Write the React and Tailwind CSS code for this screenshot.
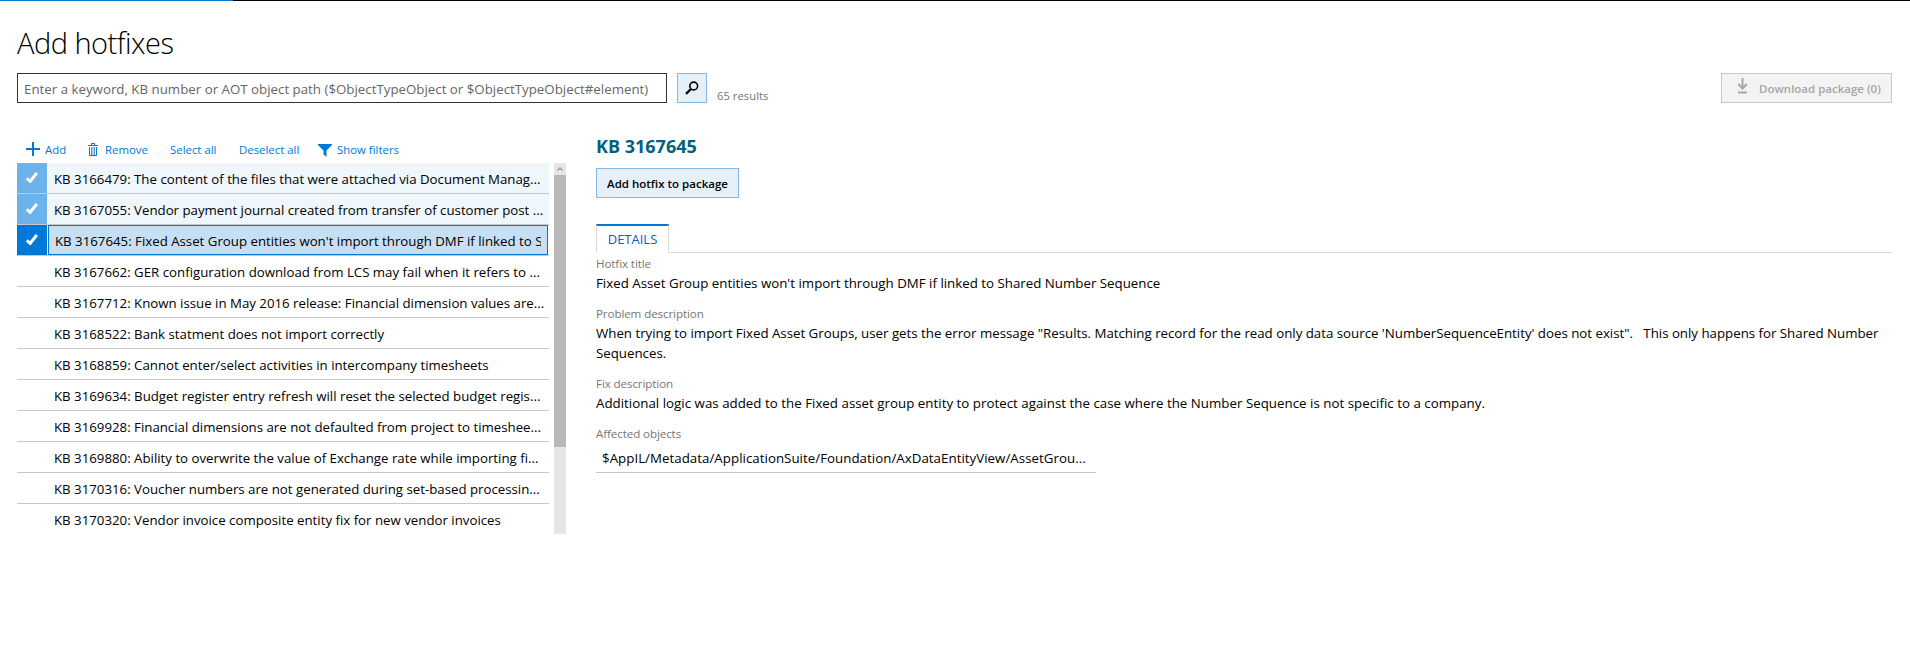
const ROWS = [
  'KB 3166479: The content of the files that were attached via Document Manag...',
  'KB 3167055: Vendor payment journal created from transfer of customer post ...',
  "KB 3167645: Fixed Asset Group entities won't import through DMF if linked to S",
  'KB 3167662: GER configuration download from LCS may fail when it refers to ...',
  'KB 3167712: Known issue in May 2016 release: Financial dimension values are...',
  'KB 3168522: Bank statment does not import correctly',
  'KB 3168859: Cannot enter/select activities in intercompany timesheets',
  'KB 3169634: Budget register entry refresh will reset the selected budget regis...',
  'KB 3169928: Financial dimensions are not defaulted from project to timeshee...',
  'KB 3169880: Ability to overwrite the value of Exchange rate while importing fi...',
  'KB 3170316: Voucher numbers are not generated during set-based processin...',
  'KB 3170320: Vendor invoice composite entity fix for new vendor invoices',
];

function Check() {
  return (
    <svg width="12" height="12" viewBox="0 0 12 12" fill="none" stroke="#fff" strokeWidth="3">
      <path d="M.8 6.400 4.200 9.300 10.800 1" />
    </svg>
  );
}

function Row({ text, index }) {
  const active = index === 2;
  const checked = index < 3;
  return (
    <li className="flex h-[31px] shrink-0 border-b border-[#c8c8c8]">
      <div className={`flex w-[30px] items-center justify-center ${active ? 'bg-[#0078d7]' : checked ? 'bg-[#6cb2eb]' : ''}`}>
        {checked && <Check />}
      </div>
      {active ? (
        <div className="mr-px ml-px flex min-w-0 flex-1 items-center border border-[#0078d7] bg-[#c7dff3] pt-[3px] pr-[6px] pl-[6px]">
          <span className="overflow-hidden whitespace-nowrap">{text}</span>
        </div>
      ) : (
        <div className={`flex min-w-0 flex-1 items-center overflow-hidden pt-[3px] pl-[7px] whitespace-nowrap ${checked ? 'bg-[#eff6fc]' : ''}`}>
          {text}
        </div>
      )}
    </li>
  );
}

function Field({ label, children }) {
  return (
    <div className="mb-[11px]">
      <div className="h-[19px] text-[11.6px] leading-5 tracking-[-0.1px] text-[#767676]">{label}</div>
      <div className="leading-5">{children}</div>
    </div>
  );
}

export default function App() {
  return (
    <div className="h-[648px] w-[1910px] overflow-hidden bg-white font-['Open_Sans','Noto_Sans',sans-serif] text-[13.3px] text-black">
      <div className="flex h-px bg-black">
        <div className="w-[233px] bg-[#0078d7]" />
      </div>
      <header className="pt-[20px] pr-[18px] pl-[17px]">
        <h1 className="h-[44px] text-[29px] leading-[44px] font-light tracking-[-0.5px]">Add hotfixes</h1>
        <div className="mt-[8px] flex h-[30px]">
          <div className="flex w-[650px] items-center border border-[#333] pt-[3px] pl-[6px] whitespace-nowrap text-[#666]">
            Enter a keyword, KB number or AOT object path ($ObjectTypeObject or $ObjectTypeObject#element)
          </div>
          <button className="ml-[10px] flex w-[30px] items-center justify-center border border-[#83bae5] bg-[#e6f0f9]">
            <svg width="14" height="14" viewBox="0 0 14 14" fill="none" stroke="#000">
              <circle cx="8.7" cy="5" r="3.9" strokeWidth="1.6" />
              <path d="M6 8 1 12.8" strokeWidth="2.4" />
            </svg>
          </button>
          <span className="ml-[10px] pt-[13px] text-[11.3px] leading-5 text-[#767676]">65 results</span>
          <button className="ml-auto flex w-[171px] items-center border border-[#c8c8c8] bg-[#f3f3f3] pt-[2px] pl-[15px] text-[11.5px] font-semibold whitespace-nowrap text-[#a6a6a6]">
            <svg width="11" height="16" viewBox="0 0 11 16" fill="none" stroke="#a6a6a6" className="mr-[11px] mb-[6px]">
              <path d="M5.5 0v10M1.2 6l4.3 4.6L9.800 6" strokeWidth="2" />
              <path d="M1 14.500h9" strokeWidth="2" />
            </svg>
            Download package (0)
          </button>
        </div>
      </header>

      <main className="flex pl-[17px]">
        <section className="w-[549px] pt-[35px]">
          <div className="flex h-[25px] items-center pb-[2px] pl-[9px] text-[11.4px] whitespace-nowrap text-[#0078d7]">
            <div className="flex w-[61px] items-center">
              <svg width="14" height="14" viewBox="0 0 14 14" stroke="#0078d7" strokeWidth="2" className="mr-[5px]">
                <path d="M7 0v14M0 7h14" />
              </svg>
              Add
            </div>
            <div className="flex w-[83px] items-center">
              <svg width="10" height="13" viewBox="0 0 10 13" fill="none" stroke="#0078d7" className="mr-[7px] ml-px">
                <path d="M0 2.500h10M3.500 2V.5h3V2M1.500 4v8.500h7V4" />
                <path d="M3.500 4v8M5 4v8M6.500 4v8" strokeWidth=".7" />
              </svg>
              Remove
            </div>
            <div className="w-[69px]">Select all</div>
            <div className="w-[79px]">Deselect all</div>
            <div className="flex items-center">
              <svg width="14" height="13" viewBox="0 0 14 13" fill="#0078d7" className="mt-[3px] mr-[5px]">
                <path d="M0 0h14v1L8.500 6.500V13L5.500 10.500v-4L0 1z" />
              </svg>
              Show filters
            </div>
          </div>
          <div className="flex h-[371px] justify-between text-[13.25px]">
            <ul className="flex h-full w-[532px] flex-col overflow-hidden">
              {ROWS.map((text, i) => (
                <Row key={text} text={text} index={i} />
              ))}
            </ul>
            <div className="w-[12px] bg-[#e6e6e6]">
              <div className="flex h-[12px] items-center justify-center">
                <svg width="6" height="4" viewBox="0 0 6 4" fill="none" stroke="#999" strokeWidth="1.300">
                  <path d="M.5 3.500 3 1l2.500 2.500" />
                </svg>
              </div>
              <div className="h-[272px] bg-[#b8b8b8]" />
            </div>
          </div>
        </section>

        <section className="ml-[30px] w-[1296px] pt-[31px]">
          <h2 className="h-[24px] text-[18px] leading-[24px] font-bold text-[#00617f]">KB 3167645</h2>
          <button className="mt-[10px] block h-[30px] w-[143px] border border-[#83bae5] bg-[#e6f0f9] pt-[2px] text-[11.5px] font-semibold whitespace-nowrap">
            Add hotfix to package
          </button>
          <div className="mt-[26px] flex h-[29px]">
            <div className="flex w-[73px] items-center justify-center border-x border-t-2 border-b border-x-[#dadada] border-t-[#0078d7] border-b-white pt-px text-[13px] text-[#1160b7]">
              DETAILS
            </div>
            <div className="flex-1 border-b border-[#dadada]" />
          </div>
          <div className="pt-px">
            <Field label="Hotfix title">Fixed Asset Group entities won't import through DMF if linked to Shared Number Sequence</Field>
            <Field label="Problem description">
              <div className="tracking-[-0.015px] whitespace-pre">
                {"When trying to import Fixed Asset Groups, user gets the error message \"Results. Matching record for the read only data source 'NumberSequenceEntity' does not exist\".   This only happens for Shared Number\nSequences."}
              </div>
            </Field>
            <Field label="Fix description">
              <div className="tracking-[0.02px]">
                Additional logic was added to the Fixed asset group entity to protect against the case where the Number Sequence is not specific to a company.
              </div>
            </Field>
            <Field label="Affected objects">
              <div className="flex h-[30px] w-[500px] items-center border-b border-[#c8c8c8] pl-[6px] tracking-[0.03px]">
                $AppIL/Metadata/ApplicationSuite/Foundation/AxDataEntityView/AssetGrou...
              </div>
            </Field>
          </div>
        </section>
      </main>
    </div>
  );
}
